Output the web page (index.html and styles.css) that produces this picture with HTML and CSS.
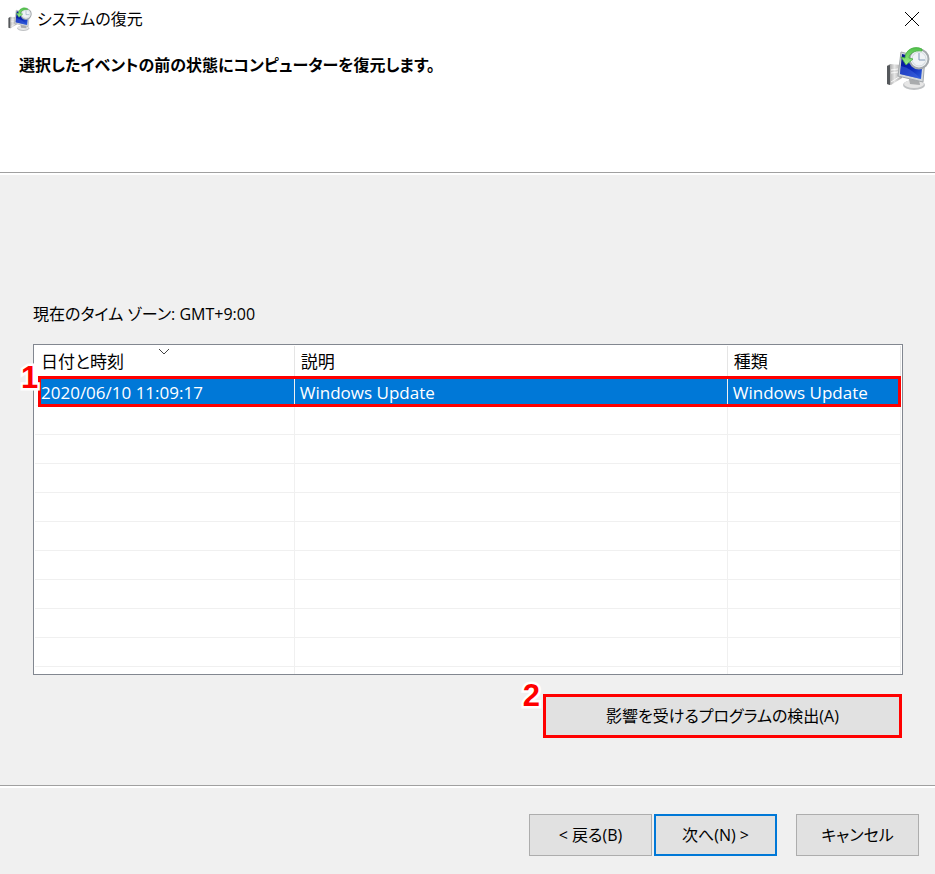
FILE: index.html
```html
<!DOCTYPE html>
<html lang="ja">
<head>
    <meta charset="UTF-8">
    <meta name="viewport" content="width=device-width, initial-scale=1.0">
    <title>システムの復元</title>
    <link rel="stylesheet" href="styles.css">
</head>
<body>
    <!-- Shared computer + clock icon -->
    <svg width="0" height="0" class="defs" aria-hidden="true">
        <defs>
            <linearGradient id="screen" x1="0" y1="0" x2="1" y2="1">
                <stop offset="0" stop-color="#06148c"/>
                <stop offset="0.5" stop-color="#0823b4"/>
                <stop offset="1" stop-color="#2f62e0"/>
            </linearGradient>
            <linearGradient id="metal" x1="0" y1="0" x2="1" y2="0">
                <stop offset="0" stop-color="#8a8a8a"/>
                <stop offset="0.5" stop-color="#e4e4e4"/>
                <stop offset="1" stop-color="#a4a4a4"/>
            </linearGradient>
            <linearGradient id="arrow" x1="0" y1="0" x2="0" y2="1">
                <stop offset="0" stop-color="#4fc04a"/>
                <stop offset="1" stop-color="#a4f08c"/>
            </linearGradient>
            <symbol id="restore" viewBox="0 0 44 44">
                <path d="M1 20l3-2 12 1v13l-11 7-4-1z" fill="url(#metal)"/>
                <path d="M1 20l3-1v20l-3-1z" fill="#55585c"/>
                <path d="M5 24l7-1M5 27l7-1M5 36l11-7" stroke="#f8f8f8" fill="none"/>
                <ellipse cx="28" cy="39" rx="11" ry="5" fill="#c0c2c4"/>
                <ellipse cx="28" cy="38" rx="10" ry="4" fill="#e6e6e6"/>
                <path d="M23 33l10 1 1 5-10-1z" fill="#a9abad"/>
                <path d="M15 6l24 6-2 24-25-6z" fill="#d3d7da" stroke="#a2a6aa"/>
                <path d="M16 8l21 5-2 20-21-5z" fill="url(#screen)"/>
                <path d="M15 20q10 2 20 13l-21-5z" fill="#4169df" opacity=".5"/>
                <circle cx="33" cy="13" r="9.500" fill="#f0f3f6" stroke="#a4a9ad" stroke-width="2"/>
                <circle cx="33" cy="13" r="7" fill="none" stroke="#d3dade"/>
                <path d="M33 7v7h6" stroke="#8098b4" fill="none"/>
                <path d="M36 3C28-1 19 4 19 12l-4-1 5 8 7-6-4-1c0-4 5-8 13-7z" fill="url(#arrow)" stroke="#46ae42" stroke-width=".8"/>
            </symbol>
        </defs>
    </svg>

    <div class="window">
        <header class="top">
            <div class="titlebar">
                <svg class="icon-small" aria-hidden="true"><use href="#restore"/></svg>
                <span class="title">システムの復元</span>
                <button type="button" class="close" aria-label="閉じる">
                    <svg width="16" height="16" viewBox="0 0 16 16"><path d="M1 1l14 14M15 1L1 15" stroke="#000" fill="none"/></svg>
                </button>
            </div>
            <div class="banner">
                <h1>選択したイベントの前の状態にコンピューターを復元します。</h1>
                <svg class="icon-large" aria-hidden="true"><use href="#restore"/></svg>
            </div>
        </header>

        <main class="content">
            <p class="timezone">現在のタイム ゾーン: GMT+9:00</p>

            <div class="list-area">
                <div class="list">
                    <table>
                        <colgroup>
                            <col class="col-date">
                            <col class="col-desc">
                            <col class="col-type">
                        </colgroup>
                        <thead>
                            <tr>
                                <th class="sorted">日付と時刻
                                    <svg class="sort" width="12" height="7" viewBox="0 0 12 7"><path d="M1 1l5 5 5-5" stroke="#444" fill="none"/></svg>
                                </th>
                                <th>説明</th>
                                <th>種類</th>
                            </tr>
                        </thead>
                        <tbody>
                            <tr class="selected"><td>2020/06/10 11:09:17</td><td>Windows Update</td><td>Windows Update</td></tr>
                            <tr><td></td><td></td><td></td></tr>
                            <tr><td></td><td></td><td></td></tr>
                            <tr><td></td><td></td><td></td></tr>
                            <tr><td></td><td></td><td></td></tr>
                            <tr><td></td><td></td><td></td></tr>
                            <tr><td></td><td></td><td></td></tr>
                            <tr><td></td><td></td><td></td></tr>
                            <tr><td></td><td></td><td></td></tr>
                            <tr><td></td><td></td><td></td></tr>
                            <tr><td></td><td></td><td></td></tr>
                        </tbody>
                    </table>
                </div>
                <div class="row-mark"></div>
                <span class="step step-one">1</span>
            </div>

            <div class="scan">
                <span class="step step-two">2</span>
                <button type="button" class="scan-button">影響を受けるプログラムの検出(A)</button>
            </div>
        </main>

        <footer class="actions">
            <button type="button">&lt; 戻る(B)</button>
            <button type="button" class="default">次へ(N) &gt;</button>
            <button type="button" class="cancel">キャンセル</button>
        </footer>
    </div>
</body>
</html>
```

FILE: styles.css
```css
* {
    box-sizing: border-box;
}

body {
    margin: 0;
    background-color: #f0f0f0;
    color: #000;
    font-family: "Open Sans", "Noto Sans CJK JP", sans-serif;
    font-size: 16px;
    line-height: 24px;
    font-feature-settings: "palt";
}

.defs {
    position: absolute;
}

.window {
    display: flex;
    flex-direction: column;
    min-height: 100vh;
}

/* White header */
.top {
    height: 173px;
    background: #fff;
    border-bottom: 1px solid #a0a0a0;
}

.titlebar {
    display: flex;
    align-items: center;
    height: 38px;
    padding: 0 15px 0 8px;
}

.icon-small {
    width: 24px;
    height: 24px;
    margin-right: 5px;
}

.close {
    display: flex;
    margin-left: auto;
    padding: 0;
    border: none;
    background: none;
}

.banner {
    display: flex;
    justify-content: space-between;
    padding: 8px 5px 0 19px;
}

h1 {
    margin: 7px 0 0;
    font-size: 16px;
    font-weight: bold;
}

.icon-large {
    width: 44px;
    height: 44px;
}

.content {
    display: flex;
    flex: 1;
    flex-direction: column;
    padding: 127px 32px 47px 33px;
    border-top: 2px solid #fff;
}

.timezone {
    margin: 0 0 18px;
}

/* Restore point list */
.list-area {
    display: flex;
    flex: 1 1 0;
    position: relative;
    min-height: 240px;
}

.list {
    position: absolute;
    inset: 0;
    overflow: hidden;
    padding: 1px;
    border: 1px solid #828790;
    background: #fff;
}

table {
    width: 100%;
    table-layout: fixed;
    border-collapse: separate;
    border-spacing: 0;
    font-size: 17px;
}

.col-date {
    width: 30%;
}

.col-desc {
    width: 50%;
}

.col-type {
    width: 20%;
}

th {
    position: relative;
    height: 31px;
    padding: 1px 6px 0;
    border-right: 1px solid #e5e5e5;
    font-weight: normal;
    text-align: left;
}

td {
    height: 29px;
    padding: 4px 5px 0;
    border-right: 1px solid #f0f0f0;
    border-bottom: 1px solid #f0f0f0;
}

.selected td {
    background: #0078d7;
    color: #fff;
}

.selected td:first-child {
    border-left: 4px solid #fff;
    padding-left: 2px;
}

.sort {
    position: absolute;
    top: 2px;
    left: 50%;
    margin-left: -6px;
}

.row-mark {
    position: absolute;
    top: 32px;
    left: 5px;
    right: 2px;
    height: 31px;
    border: 3px solid #f00;
}

.step {
    position: absolute;
    color: #f00;
    font: bold 31px/32px "Liberation Sans", sans-serif;
    -webkit-text-stroke: 5px #fff;
    paint-order: stroke fill;
}

.step-one {
    top: 18px;
    left: -12px;
}

.scan {
    display: flex;
    justify-content: flex-end;
    position: relative;
    margin-top: 19px;
    padding-right: 1px;
}

.step-two {
    right: 363px;
    top: -14px;
}

button {
    padding: 0;
    border: 1px solid #adadad;
    background: #e1e1e1;
    color: #000;
    font: inherit;
    font-feature-settings: inherit;
}

.scan-button {
    width: 359px;
    height: 44px;
    border: 3px solid #f00;
}

/* Wizard buttons */
.actions {
    display: flex;
    justify-content: flex-end;
    gap: 2px;
    padding: 28px 16px 18px;
    border-top: 1px solid #a0a0a0;
    box-shadow: inset 0 2px #fff;
}

.actions button {
    width: 123px;
    height: 42px;
}

.actions .default {
    border: 2px solid #0078d7;
}

.actions .cancel {
    margin-left: 17px;
}
```
